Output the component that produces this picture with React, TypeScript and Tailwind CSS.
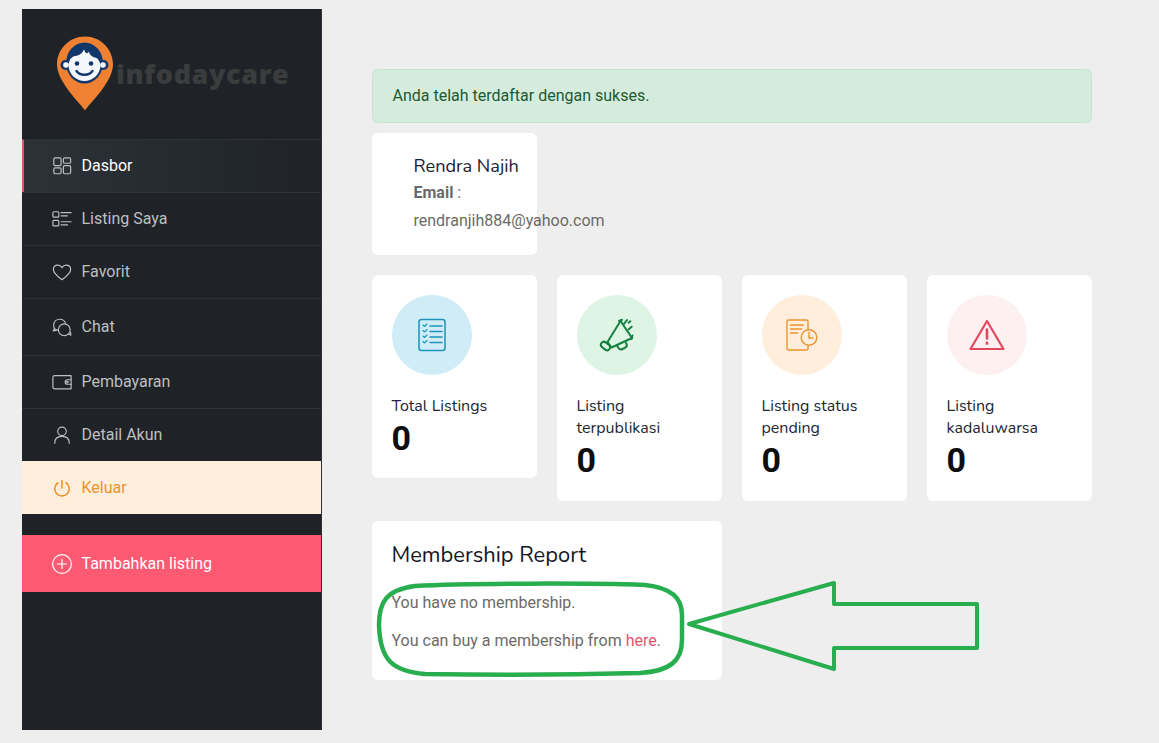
import React from "react";

const s = { fill: "none", stroke: "currentColor", strokeWidth: 1.3, strokeLinecap: "round" as const, strokeLinejoin: "round" as const };

const Ico = ({ children }: { children: React.ReactNode }) => (
  <svg width="20" height="20" viewBox="0 0 22 22" className="shrink-0" {...s}>{children}</svg>
);

const IDash = () => (
  <span className="text-[#bdbfc1]">
    <Ico>
      <rect x="2" y="2" width="8" height="8.500" rx="1.500" />
      <rect x="12.500" y="2" width="8" height="6" rx="1.500" />
      <rect x="2" y="13" width="8" height="6.500" rx="1.500" />
      <rect x="12.500" y="10.500" width="8" height="9" rx="1.500" />
    </Ico>
  </span>
);
const IList = () => (
  <Ico>
    <rect x="1" y="3" width="6.500" height="6" rx="1" />
    <rect x="1" y="12.500" width="6.500" height="6" rx="1" />
    <path d="M10 4h11M10 7.500h7M10 14h11M10 17.500h7" />
  </Ico>
);
const IHeart = () => (
  <Ico>
    <path d="M11 19.500C6.500 16 1.500 12.500 1.500 8.200 1.500 5.300 3.700 3.500 6.500 3.500c1.900 0 3.400 1 4.500 2.700 1.100-1.700 2.600-2.700 4.500-2.700 2.800 0 5 1.800 5 4.700 0 4.300-5 7.800-9.500 11.300z" />
  </Ico>
);
const IChat = () => (
  <Ico>
    <path d="M6 14.500C3.500 14 1.500 11.500 1.800 8.500 2.200 5 5 2.500 8.500 2.500c2.800 0 5.200 1.600 6.300 4M2.500 12.500l-1.200 2.800 3-.6" />
    <circle cx="13.500" cy="14" r="6.500" />
    <path d="M18 18.500l2.700 1.500-.3-3" />
  </Ico>
);
const IWallet = () => (
  <Ico>
    <path d="M3 4h18v14.500H3a2 2 0 0 1-2-2V6a2 2 0 0 1 2-2z" />
    <path d="M21 8.500h-4a2.500 2.500 0 0 0 0 5h4" />
    <circle cx="17" cy="11" r=".8" />
  </Ico>
);
const IUser = () => (
  <Ico>
    <circle cx="11" cy="7" r="4.700" />
    <path d="M3 20c0-4.500 3-7.500 8-7.500s8 3 8 7.500" />
  </Ico>
);
const IPower = () => (
  <svg width="20" height="20" viewBox="0 0 22 22" className="shrink-0" fill="none" stroke="currentColor" strokeWidth="1.800" strokeLinecap="round">
    <path d="M11 3v8" />
    <path d="M6.500 5.200a8 8 0 1 0 9 0" />
  </svg>
);
const IPlus = () => (
  <Ico>
    <circle cx="11" cy="11" r="10.300" />
    <path d="M11 6v10M6 11h10" />
  </Ico>
);

const Item = ({ icon, label, h = "h-[53px]", pad = "pl-[30px]", cls = "text-[#bdbfc1] border-t border-[#2c3136]" }: { icon: React.ReactNode; label: string; h?: string; pad?: string; cls?: string }) => (
  <div className={`flex items-center gap-[9.500px] text-[16px] ${pad} ${h} ${cls}`}>
    {icon}
    <span>{label}</span>
  </div>
);

const Logo = () => (
  <div className="h-[130px] flex items-start pt-[27px] pl-[34px]">
    <svg width="58" height="75" viewBox="0 0 58 75" className="shrink-0">
      <path d="M29 74.500C25 68 1 46 1 28.500 1 13 13.500.500 29 .500S57 13 57 28.500C57 46 33 68 29 74.500z" fill="#f08133" />
      <ellipse cx="28.500" cy="27" rx="18.500" ry="20.500" fill="#12386b" />
      <circle cx="9.500" cy="29" r="5" fill="#12386b" />
      <circle cx="47.500" cy="29" r="5" fill="#12386b" />
      <circle cx="10" cy="29" r="2.800" fill="#f4f7fb" />
      <circle cx="47" cy="29" r="2.800" fill="#f4f7fb" />
      <path d="M12.500 29C13 24 15 21 18.500 20 22 20 26 18 28 13.500 29.500 17.500 31 18.500 33 15.500 33 18 36 21 39 21.500 41.500 22 44 25 44.500 29 44.500 38 37 45 28.500 45 20 45 12.500 38 12.500 29z" fill="#f4f7fb" />
      <circle cx="21" cy="27.500" r="2.300" fill="#12386b" />
      <circle cx="35" cy="27.500" r="2.300" fill="#12386b" />
      <path d="M20.500 35c3.500 5 12.500 5 16 0" fill="none" stroke="#12386b" strokeWidth="2.300" strokeLinecap="round" />
    </svg>
    <span className="ml-[2px] mt-[20px] text-[27px] leading-[36px] font-extrabold text-[#3a3c3e] tracking-[0.6px] font-['Open_Sans',sans-serif]">infodaycare</span>
  </div>
);

const Stat = ({ color, bg, icon, label, h }: { color: string; bg: string; icon: React.ReactNode; label: React.ReactNode; h: string }) => (
  <div className={`w-[165px] bg-white rounded-[6px] p-5 ${h}`}>
    <div className={`w-20 h-20 rounded-full flex items-center justify-center ${bg} ${color}`}>{icon}</div>
    <div className="mt-5 ml-[-0.500px] text-[16px] leading-[22px] text-[#1d2735] font-['Nunito','Lato',sans-serif] ">{label}</div>
    <div className="ml-[-0.500px] text-[34px] leading-[43px] font-bold text-[#0e0e0e] font-['Roboto',sans-serif]">0</div>
  </div>
);

export default function App() {
  return (
    <div className="relative w-[1159px] h-[743px] overflow-hidden bg-[#eeeeee] font-['Roboto',sans-serif] flex items-start pl-[22px] pt-[9px]">
      <aside className="w-[300px] h-[721px] bg-[#1f2327] shrink-0 border-r border-[#2c3136]">
        <Logo />
        <Item
          icon={<IDash />}
          label="Dasbor"
          pad="pl-[28px]"
          cls="text-white border-t border-[#2c3136] border-l-2 border-l-[#e0566b] bg-gradient-to-r from-[#2c3238] to-[#1f2327]"
        />
        <Item icon={<IList />} label="Listing Saya" />
        <Item icon={<IHeart />} label="Favorit" />
        <Item icon={<IChat />} label="Chat" h="h-[57px]" />
        <Item icon={<IWallet />} label="Pembayaran" />
        <Item icon={<IUser />} label="Detail Akun" />
        <Item icon={<IPower />} label="Keluar" cls="bg-[#feeedb] text-[#ec9430]" />
        <Item icon={<IPlus />} label="Tambahkan listing" h="h-[57px] mt-[21px]" cls="bg-[#fb5a72] text-white" />
      </aside>

      <main className="ml-[50px] w-[720px] pt-[60px]">
        <div className="h-[54px] rounded-[6px] bg-[#d5ecdc] border border-[#c5e5cf] text-[#1c5a33] text-[16px] flex items-center pl-[19.500px]">
          Anda telah terdaftar dengan sukses.
        </div>
        <div className="mt-[10px] w-[165px] h-[122px] bg-white rounded-[6px] pl-[41.500px] pt-[20px]">
          <div className="text-[18.200px] leading-[26px] text-[#1c2233] font-['Nunito','Lato',sans-serif] whitespace-nowrap">Rendra Najih</div>
          <div className="text-[16px] leading-[28px] text-[#6c6a68] whitespace-nowrap">
            <b className="font-bold">Email</b> :
          </div>
          <div className="text-[16px] leading-[28px] text-[#6c6a68] whitespace-nowrap">rendranjih884@yahoo.com</div>
        </div>

        <div className="mt-5 flex items-start gap-5">
          <Stat
            h="h-[203px]"
            bg="bg-[#d0ecf7]"
            color="text-[#1d93bd]"
            label="Total Listings"
            icon={
              <svg width="28" height="34" viewBox="0 0 28 34" fill="none" stroke="currentColor" strokeWidth="1.500" strokeLinecap="round" strokeLinejoin="round">
                <rect x="1" y="1.500" width="26" height="31" rx="2.500" />
                <path d="M5 7l1.500 1.500L9 6M5 12.500L6.500 14 9 11.500M5 18l1.500 1.500L9 17M5 23.500L6.500 25 9 22.500" strokeWidth="1.100" />
                <path d="M12 8h12M12 13.500h12M12 19h12M12 24.500h12" />
              </svg>
            }
          />
          <Stat
            h="h-[226px]"
            bg="bg-[#def5e5]"
            color="text-[#15803d]"
            label={<>Listing<br />terpublikasi</>}
            icon={
              <svg width="36" height="36" viewBox="-1 -1 36 36" fill="none" stroke="currentColor" strokeWidth="2" strokeLinecap="round" strokeLinejoin="round">
                <path d="M20.500 3L32 20 11.500 29.500 7.500 24z" />
                <path d="M19 3l3-1.200M32.500 17.500l-1 3.500" />
                <rect x="0.500" y="25" width="10" height="6" rx="3" transform="rotate(38 5.500 28)" />
                <path d="M17 27.500l1.500 2.500c1 1.500 2.500 1.800 4 1l3-1.500c1.500-1 1.500-2.500 1-3.500l-.5-1" />
                <path d="M23.500 6.500l3.500-4.500M28.500 11.500l3.200-2.800M28.500 4.700l1.800-1.500" />
              </svg>
            }
          />
          <Stat
            h="h-[226px]"
            bg="bg-[#feeedb]"
            color="text-[#ec9430]"
            label={<>Listing status<br />pending</>}
            icon={
              <svg width="32" height="32" viewBox="0 0 32 32" fill="none" stroke="currentColor" strokeWidth="1.400" strokeLinecap="round" strokeLinejoin="round">
                <path d="M22 10V2.500A1.500 1.500 0 0 0 20.500 1H2.500A1.500 1.500 0 0 0 1 2.500v27A1.500 1.500 0 0 0 2.500 31h18a1.500 1.500 0 0 0 1.500-1.500V27" />
                <path d="M4.500 6h13M4.500 10h11M4.500 14h7" />
                <circle cx="23" cy="18.500" r="7.800" />
                <path d="M23 13.500v5.500h4" />
              </svg>
            }
          />
          <Stat
            h="h-[226px]"
            bg="bg-[#fdf0f1]"
            color="text-[#e04a5c]"
            label={<>Listing<br />kadaluwarsa</>}
            icon={
              <svg width="36" height="32" viewBox="0 0 36 32" fill="none" stroke="currentColor" strokeWidth="2.200" strokeLinecap="round" strokeLinejoin="round">
                <path d="M18 2L34.500 30h-33z" />
                <path d="M18 10.500v9" strokeWidth="2.600" />
                <path d="M18 24v.5" strokeWidth="2.800" />
              </svg>
            }
          />
        </div>

        <div className="mt-5 w-[350px] h-[159px] bg-white rounded-[6px] px-5 pt-[20px]">
          <h3 className="ml-[-0.500px] text-[21.900px] leading-[28px] text-[#14171f] font-['Nunito','Lato',sans-serif]">Membership Report</h3>
          <p className="mt-[20px] ml-[-0.500px] text-[16px] leading-[28px] text-[#6c6a68] whitespace-nowrap">You have no membership.</p>
          <p className="mt-[10px] ml-[-0.500px] text-[16px] leading-[28px] text-[#6c6a68] whitespace-nowrap">
            You can buy a membership from <span className="text-[#e0566b]">here</span>.
          </p>
        </div>
      </main>

      <svg className="absolute left-0 top-0 pointer-events-none" width="1159" height="743" fill="none" stroke="#28ad4f" strokeWidth="4" strokeLinejoin="round">
        <path strokeWidth="4.500" d="M379 625C379 602 386 590 415 586C470 583 590 583 645 585C672 588 682 598 682 615L682 640C682 661 670 671 640 673C570 675 480 675 425 674C392 671 380 660 379 625z" />
        <path d="M689 624L834 583V604H977V648H834V669z" />
      </svg>
    </div>
  );
}
